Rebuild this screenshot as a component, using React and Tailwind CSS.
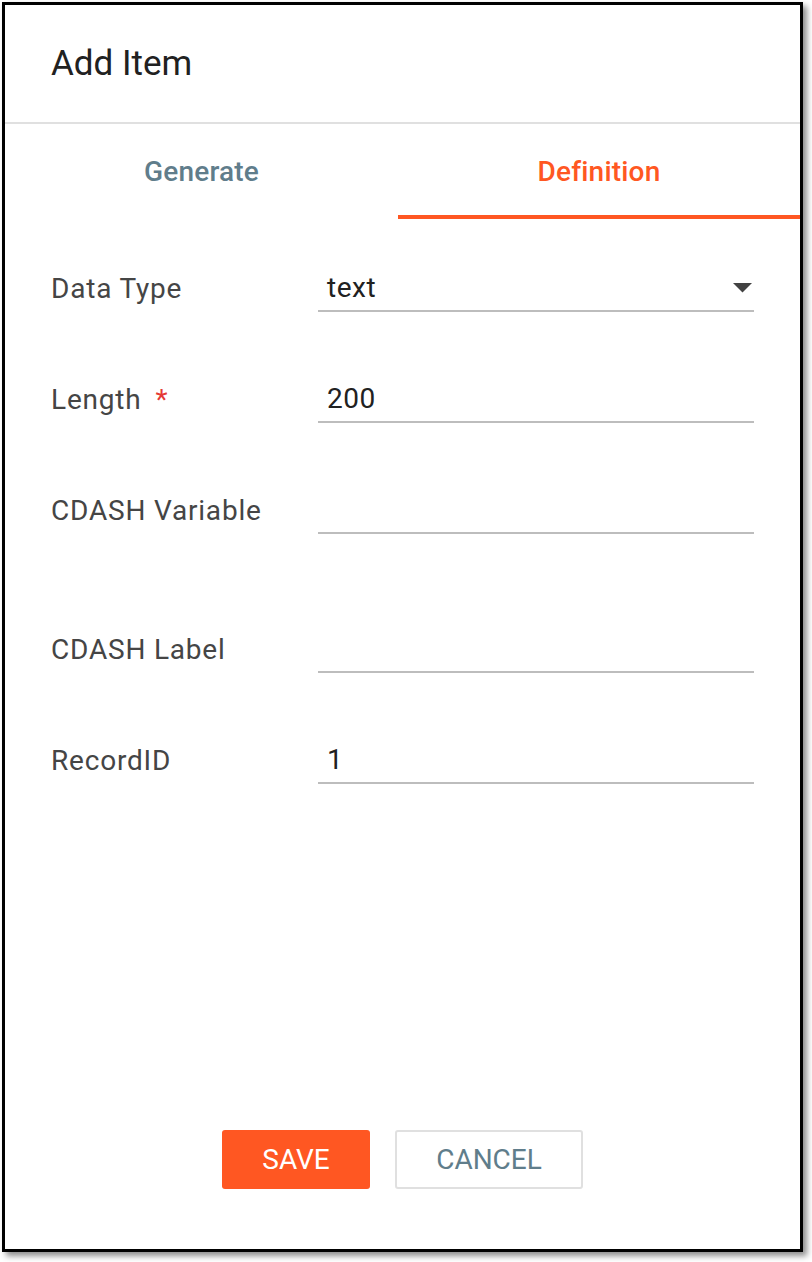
const font = { fontFamily: 'Roboto, "Liberation Sans", sans-serif' };

function Field({ label, value, required, select, className = '' }) {
  return (
    <div className={`flex items-center ${className}`}>
      <div className="w-[267px] text-[28px] tracking-[0.8px] text-[#454545]">
        {label}
        {required && <span className="ml-[14px] text-[#e53935]">*</span>}
      </div>
      <div className="flex-1 h-[46px] border-b-2 border-[#bdbdbd] flex items-center pl-[9px] pr-[1px]">
        <span className="flex-1 text-[28px] tracking-[0.5px] text-[#212121]">{value}</span>
        {select && (
          <svg width="19" height="10" viewBox="0 0 19 10" className="mr-[1px]">
            <path d="M0 0h19L9.5 9.5z" fill="#424242" />
          </svg>
        )}
      </div>
    </div>
  );
}

export default function App() {
  return (
    <div className="w-[812px] h-[1262px] bg-white pt-[2px] pl-[2px]" style={font}>
      <div className="w-[801px] h-[1250px] border-[3px] border-black bg-white flex flex-col shadow-[4px_4px_6px_rgba(0,0,0,0.45)]">
        <div className="h-[119px] flex items-center px-[46px] pt-[2px] border-b-2 border-[#e0e0e0] text-[35px] text-[#212121]">
          Add Item
        </div>

        <div className="flex h-[95px]">
          <div className="w-[393px] flex items-center justify-center text-[28px] font-medium text-[#607d8b] tracking-[0.2px]">
            Generate
          </div>
          <div className="flex-1 flex items-center justify-center text-[28px] font-medium text-[#ff5722] border-b-4 border-[#ff5722] pt-[4px] tracking-[0.2px]">
            Definition
          </div>
        </div>

        <div className="flex-1 px-[46px]">
          <Field label="Data Type" value="text" select className="mt-[47px]" />
          <Field label="Length" value="200" required className="mt-[65px]" />
          <Field label="CDASH Variable" value="" className="mt-[65px]" />
          <Field label="CDASH Label" value="" className="mt-[93px]" />
          <Field label="RecordID" value="1" className="mt-[65px]" />
        </div>

        <div className="flex justify-center gap-[25px] pb-[60px]">
          <button className="w-[148px] h-[59px] rounded-[3px] bg-[#ff5722] text-white text-[28px]">SAVE</button>
          <button className="w-[188px] h-[59px] rounded-[3px] border-2 border-[#e0e0e0] bg-white text-[#607d8b] text-[28px]">CANCEL</button>
        </div>
      </div>
    </div>
  );
}
